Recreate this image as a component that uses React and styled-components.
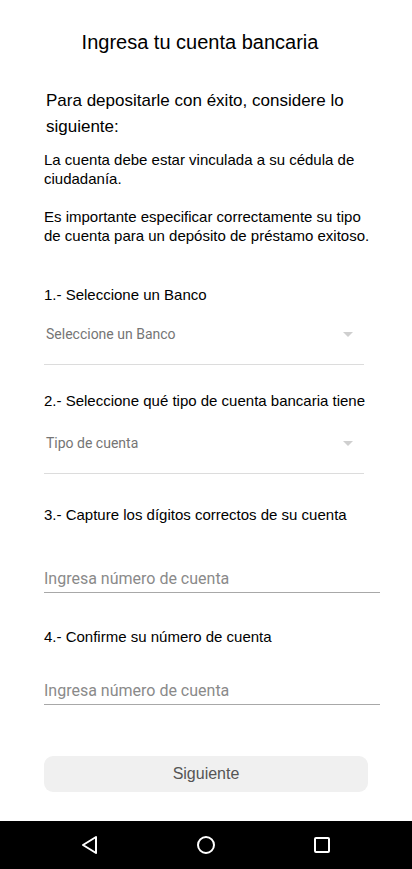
import React from 'react'
import styled, { createGlobalStyle } from 'styled-components'

const GlobalStyle = createGlobalStyle`
  html, body {
    margin: 0;
    padding: 0;
    background: #ffffff;
  }
  body {
    font-family: "Liberation Sans", Arial, sans-serif;
    color: #000;
  }
`

const Screen = styled.div`
  width: 412px;
  height: 869px;
  display: flex;
  flex-direction: column;
  background: #fff;
`

const Content = styled.div`
  flex: 1;
  display: flex;
  flex-direction: column;
  padding: 30px 0 0 44px;
`

const Title = styled.h1`
  margin: 0 12px 0 -44px;
  font-size: 20px;
  line-height: 24px;
  font-weight: 400;
  text-align: center;
`

const Lead = styled.p`
  margin: 34px 0 0 2px;
  font-size: 17px;
  line-height: 26px;
  width: 310px;
`

const Note = styled.p`
  margin: ${p => p.$top}px 0 0;
  font-size: 15px;
  line-height: 18.5px;
  width: 328px;
`

const Label = styled.div`
  margin-top: ${p => p.$top}px;
  font-size: 15px;
  line-height: 18px;
`

const Select = styled.div`
  width: 320px;
  margin-top: ${p => p.$top}px;
  padding: 12px 0 22px;
  display: flex;
  align-items: center;
  justify-content: space-between;
  border-bottom: 1px solid #dcdcdc;
  font-family: Roboto, "Liberation Sans", sans-serif;
  font-size: 14px;
  line-height: 16px;
  color: #757575;
`

const Placeholder = styled.span`
  padding-left: 2px;
`

const Caret = styled.span`
  width: 0;
  height: 0;
  margin-right: 11px;
  border-left: 5px solid transparent;
  border-right: 5px solid transparent;
  border-top: 5px solid #cfcfcf;
`

const Input = styled.input`
  width: 336px;
  margin-top: ${p => p.$top}px;
  padding: 0 0 4px;
  border: none;
  border-bottom: 1px solid #a8a8a8;
  outline: none;
  background: transparent;
  font-family: Roboto, "Liberation Sans", sans-serif;
  font-size: 16px;
  line-height: 18px;
  color: #222;
  &::placeholder {
    color: #8a8a8a;
  }
`

const Button = styled.button`
  width: 324px;
  height: 36px;
  margin-top: 51px;
  border: none;
  border-radius: 9px;
  background: #f0f0f0;
  font-family: "Liberation Sans", Arial, sans-serif;
  font-size: 16px;
  color: #555;
  cursor: pointer;
`

const NavBar = styled.nav`
  height: 48px;
  background: #000;
  display: flex;
  align-items: center;
  justify-content: space-around;
  padding: 0 32px;
`

const NavIcon = styled.svg`
  width: 22px;
  height: 22px;
`

export default function App() {
  return (
    <>
      <GlobalStyle />
      <Screen>
        <Content>
          <Title>Ingresa tu cuenta bancaria</Title>
          <Lead>Para depositarle con éxito, considere lo siguiente:</Lead>
          <Note $top={11}>La cuenta debe estar vinculada a su cédula de ciudadanía.</Note>
          <Note $top={20}>Es importante especificar correctamente su tipo de cuenta para un depósito de préstamo exitoso.</Note>

          <Label $top={41}>1.- Seleccione un Banco</Label>
          <Select $top={10}>
            <Placeholder>Seleccione un Banco</Placeholder>
            <Caret />
          </Select>

          <Label $top={27}>2.- Seleccione qué tipo de cuenta bancaria tiene</Label>
          <Select $top={13}>
            <Placeholder>Tipo de cuenta</Placeholder>
            <Caret />
          </Select>

          <Label $top={32}>3.- Capture los dígitos correctos de su cuenta</Label>
          <Input $top={46} placeholder="Ingresa número de cuenta" />

          <Label $top={35}>4.- Confirme su número de cuenta</Label>
          <Input $top={36} placeholder="Ingresa número de cuenta" />

          <Button>Siguiente</Button>
        </Content>
        <NavBar>
          <NavIcon viewBox="0 0 22 22">
            <path d="M17 3 L4 11 L17 19 Z" fill="none" stroke="#fff" strokeWidth="2" strokeLinejoin="round" />
          </NavIcon>
          <NavIcon viewBox="0 0 22 22">
            <circle cx="11" cy="11" r="8" fill="none" stroke="#fff" strokeWidth="2" />
          </NavIcon>
          <NavIcon viewBox="0 0 22 22">
            <rect x="4" y="4" width="14" height="14" rx="1" fill="none" stroke="#fff" strokeWidth="2" />
          </NavIcon>
        </NavBar>
      </Screen>
    </>
  )
}
